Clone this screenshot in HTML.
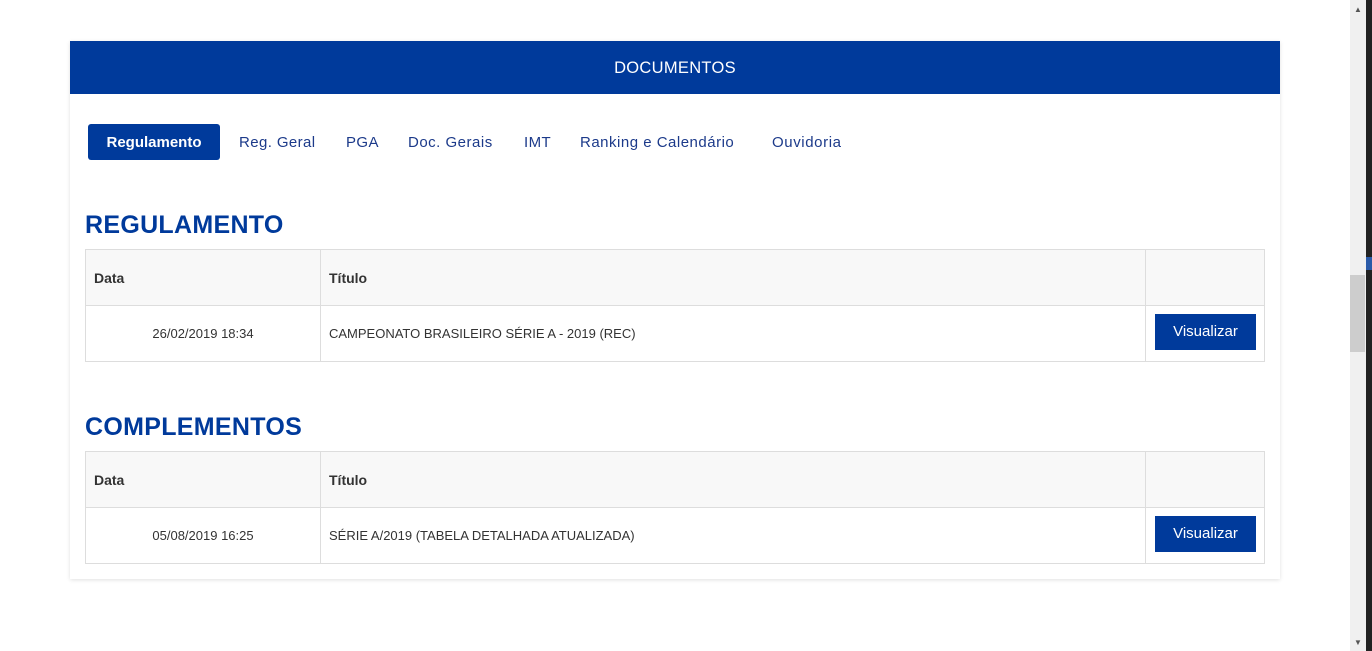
<!DOCTYPE html>
<html><head><meta charset="utf-8"><style>
*{margin:0;padding:0;box-sizing:border-box}
body{width:1372px;height:651px;background:#fff;font-family:"Liberation Sans",sans-serif;position:relative;overflow:hidden;color:#333}
.card{position:absolute;left:70px;top:41px;width:1210px;height:538px;background:#fff;box-shadow:0 1px 4px rgba(0,0,0,.12)}
.hdr{height:53px;background:#003a9b;color:#fff;text-align:center;line-height:55px;font-size:16.5px;letter-spacing:0.3px}
.tab{position:absolute;top:83px;height:36px;line-height:38px;font-size:15px;color:#1c3a8a;white-space:nowrap}
.act{background:#003a9b;color:#fff;font-weight:bold;border-radius:3px;width:132px;text-align:center}
h2{position:absolute;left:15px;font-size:25px;font-weight:bold;color:#003a9b;letter-spacing:0.3px}
table{position:absolute;left:15px;width:1180px;border-collapse:collapse;font-size:13px}
td{border:1px solid #ddd;height:56px;padding:0 8px}
tr.h td{background:#f8f8f8;font-weight:bold;font-size:14px;color:#333}
.btn{display:inline-block;background:#003a9b;color:#fff;width:101px;height:36px;line-height:36px;text-align:center;font-size:15px;margin-left:1px;position:relative;top:-2px}
.sb{position:absolute;left:1350px;top:0;width:16px;height:651px;background:#f0f0f0}
.th{position:absolute;left:1350px;top:275px;width:15px;height:77px;background:#cdcdcd}
.dk{position:absolute;left:1366px;top:0;width:6px;height:651px;background:#222}
</style></head><body>
<div class="card">
<div class="hdr">DOCUMENTOS</div>
<div class="tab act" style="left:18px">Regulamento</div>
<div class="tab" style="left:169px;letter-spacing:0.4px">Reg. Geral</div>
<div class="tab" style="left:276px;letter-spacing:0.4px">PGA</div>
<div class="tab" style="left:338px;letter-spacing:0.5px">Doc. Gerais</div>
<div class="tab" style="left:454px;letter-spacing:0.4px">IMT</div>
<div class="tab" style="left:510px;letter-spacing:0.5px">Ranking e Calendário</div>
<div class="tab" style="left:702px;letter-spacing:0.6px">Ouvidoria</div>
<h2 style="top:170px">REGULAMENTO</h2>
<table style="top:208px">
<tr class="h"><td style="width:235px">Data</td><td>Título</td><td style="width:118px"></td></tr>
<tr><td style="text-align:center">26/02/2019 18:34</td><td>CAMPEONATO BRASILEIRO SÉRIE A - 2019 (REC)</td><td><span class="btn">Visualizar</span></td></tr>
</table>
<h2 style="top:372px">COMPLEMENTOS</h2>
<table style="top:410px">
<tr class="h"><td style="width:235px">Data</td><td>Título</td><td style="width:118px"></td></tr>
<tr><td style="text-align:center">05/08/2019 16:25</td><td>SÉRIE A/2019 (TABELA DETALHADA ATUALIZADA)</td><td><span class="btn">Visualizar</span></td></tr>
</table>
</div>
<div class="sb"></div><div class="th"></div><div class="dk"></div>
<div style="position:absolute;left:1366px;top:257px;width:6px;height:13px;background:#2a5aa8"></div>
<div style="position:absolute;left:1354px;top:5px;font-size:8px;color:#555">▲</div>
<div style="position:absolute;left:1354px;top:638px;font-size:8px;color:#555">▼</div>
</body></html>
